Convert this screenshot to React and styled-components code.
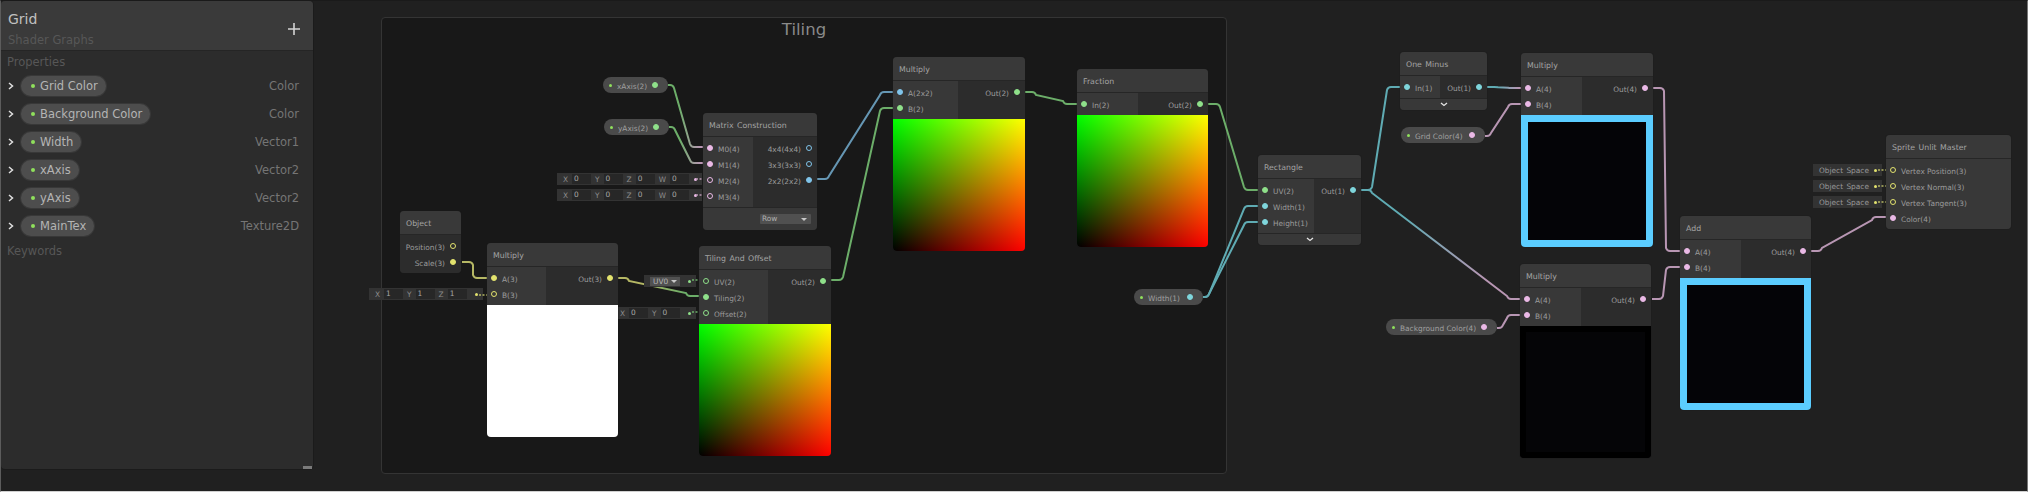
import React from "react";
import styled, { createGlobalStyle } from "styled-components";

const Global = createGlobalStyle`
  html, body { margin: 0; padding: 0; background: #202020; }
  body { font-family: "DejaVu Sans", "Liberation Sans", sans-serif; }
`;

const Colors = { vec1: "#7fd6dc", vec2: "#8fe08a", vec3: "#e3e36e", vec4: "#eab9e6", mat: "#80c4ea" };
const WireColors = { vec1: "#5fabb3", vec2: "#6cae69", vec3: "#b5b764", vec4: "#b896b3", mat: "#6596b3" };

const Page = styled.div`
  position: relative;
  width: 2028px;
  height: 492px;
  overflow: hidden;
  box-sizing: border-box;
  background: #202020;
  border-top: 1px solid #1a1a1a;
  border-left: 1px solid #5c5c5c;
  border-right: 1px solid #777;
  border-bottom: 1px solid #d0d0d0;
`;

/* blackboard */
const Board = styled.aside`
  position: absolute;
  left: 0;
  top: 0;
  width: 312px;
  height: 468px;
  background: #2c2c2c;
  border-radius: 4px;
  box-shadow: 1px 0 0 #1b1b1b, 0 1px 0 #1b1b1b;
  display: flex;
  flex-direction: column;
`;
const BoardHead = styled.header`
  height: 50px;
  flex: none;
  box-sizing: border-box;
  padding: 7px 12px 0 7px;
  background: #3a3a3a;
  border-bottom: 1px solid #252525;
  border-radius: 4px 4px 0 0;
  display: flex;
  align-items: center;
  justify-content: space-between;
`;
const BoardTitle = styled.div`
  color: #c0c0c0;
  font-size: 14px;
  line-height: 17px;
`;
const BoardSub = styled.div`
  color: #575757;
  font-size: 11.5px;
  line-height: 15px;
  margin-top: 5px;
`;
const PlusIcon = () => (
  <svg width="14" height="14" viewBox="0 0 14 14">
    <path d="M7 1V13M1 7H13" stroke="#d4d4d4" strokeWidth="1.6" />
  </svg>
);
const BoardSection = styled.div`
  color: #575757;
  font-size: 11.5px;
  line-height: 15px;
  padding-left: 6px;
  margin-top: ${(p) => p.$top}px;
`;
const PropList = styled.div`
  display: flex;
  flex-direction: column;
  gap: 8px;
  margin: 6px 0 8px;
`;
const PropRow = styled.div`
  display: flex;
  align-items: center;
  height: 20px;
  padding: 0 14px 0 7px;
`;
const Chevron = () => (
  <svg width="6" height="8" viewBox="0 0 6 8">
    <path d="M1 1L4.5 4L1 7" fill="none" stroke="#e0e0e0" strokeWidth="1.5" />
  </svg>
);
const PropPill = styled.div`
  height: 20px;
  margin-left: 7px;
  padding: 0 8px 0 10px;
  display: flex;
  align-items: center;
  gap: 5px;
  background: #4d4d4d;
  border-radius: 10px;
  box-shadow: 0 0 0 1px #383838;
  color: #b4b4b4;
  font-size: 11.5px;
`;
const GreenDot = styled.i`
  width: ${(p) => p.$size || 3}px;
  height: ${(p) => p.$size || 3}px;
  flex: none;
  border-radius: 50%;
  background: ${(p) => p.$color || "#8fe05c"};
`;
const PropType = styled.div`
  margin-left: auto;
  color: #757575;
  font-size: 11.5px;
`;
const Grip = styled.div`
  position: absolute;
  right: 1px;
  bottom: 0;
  width: 9px;
  height: 3px;
  background: #7a7a7a;
`;

/* graph */
const Group = styled.section`
  position: absolute;
  left: 380px;
  top: 16px;
  width: 846px;
  height: 457px;
  box-sizing: border-box;
  background: #181818;
  border: 1px solid #343434;
  border-radius: 4px;
  padding-top: 2px;
  text-align: center;
  color: #8a8a8a;
  font-size: 16.5px;
  line-height: 20px;
`;
const Wires = styled.svg`
  position: absolute;
  left: -1px;
  top: -1px;
`;
const NodeBox = styled.div`
  position: absolute;
  left: ${(p) => p.$x - 1}px;
  top: ${(p) => p.$y - 1}px;
  width: ${(p) => p.$w}px;
  border-radius: 4px;
  overflow: hidden;
  background: #2c2c2c;
  box-shadow: 0 0 0 1px #1c1c1c44;
  color: #9c9c9c;
  font-size: 7.4px;
`;
const NodeTitle = styled.div`
  height: 23px;
  line-height: 25px;
  padding-left: 6px;
  background: #393939;
  border-bottom: 1px solid #262626;
  color: #a4a4a4;
  font-size: 7.8px;
  word-spacing: 1px;
  white-space: nowrap;
`;
const PortArea = styled.div`
  display: flex;
`;
const PortColumn = styled.div`
  box-sizing: border-box;
  padding: 3px 0;
  flex: ${(p) => (p.$left ? "none" : "1")};
  width: ${(p) => (p.$left ? `${p.$left}px` : "auto")};
  background: ${(p) => (p.$left ? "#383838" : "#2c2c2c")};
`;
const PortRow = styled.div`
  height: 16px;
  display: flex;
  align-items: center;
  flex-direction: ${(p) => (p.$out ? "row-reverse" : "row")};
  gap: 5px;
  padding: ${(p) => (p.$out ? "0 5px 0 0" : "0 0 0 4px")};
  white-space: nowrap;
`;
const PortLabel = styled.span`
  margin-top: 2px;
`;
const Ring = styled.i`
  width: 6px;
  height: 6px;
  flex: none;
  box-sizing: border-box;
  border-radius: 50%;
  border: 1.5px solid ${(p) => p.$color};
  background: ${(p) => (p.$on ? p.$color : "transparent")};
`;
const UvPreview = styled.div`
  height: 132px;
  background: linear-gradient(to right, #000, #f00), linear-gradient(to top, #000, #0f0);
  background-blend-mode: screen;
`;
const FlatPreview = styled.div`
  height: 132px;
  box-sizing: border-box;
  background: ${(p) => p.$fill};
  border: ${(p) => p.$edge || 0}px solid ${(p) => p.$line || "transparent"};
`;
const Footer = styled.div`
  height: 11px;
  background: #383838;
  border-top: 1px solid #262626;
  display: flex;
  align-items: center;
  justify-content: ${(p) => (p.$end ? "flex-end" : "center")};
  padding-right: ${(p) => (p.$end ? 6 : 0)}px;
`;
const TallFooter = styled(Footer)`
  height: 22px;
`;
const MiniSelect = styled.div`
  width: 51px;
  height: 10px;
  line-height: 10px;
  background: #505050;
  border-radius: 1px;
  padding-left: 2px;
  box-sizing: border-box;
  display: flex;
  align-items: center;
  justify-content: space-between;
  padding-right: 4px;
  color: #b0b0b0;
  font-size: 7.4px;
`;
const Caret = styled.i`
  width: 0;
  height: 0;
  border-left: 3px solid transparent;
  border-right: 3px solid transparent;
  border-top: 3px solid #c8c8c8;
`;
const Fold = () => (
  <svg width="8" height="5" viewBox="0 0 8 5">
    <path d="M1 1L4 3.5L7 1" fill="none" stroke="#e4e4e4" strokeWidth="1.3" />
  </svg>
);

const Pill = styled.div`
  position: absolute;
  left: ${(p) => p.$x - 1}px;
  top: ${(p) => p.$y - 1}px;
  width: ${(p) => p.$w}px;
  height: 16px;
  box-sizing: border-box;
  padding: 0 10px 0 6px;
  border-radius: 8px;
  background: #4a4a4a;
  display: flex;
  align-items: center;
  color: #a0a0a0;
  font-size: 7.4px;
  gap: 5px;
  white-space: nowrap;
`;
const PillEnd = styled(Ring)`
  margin-left: auto;
`;

const Stub = styled.div`
  position: absolute;
  left: ${(p) => p.$x - 1}px;
  top: ${(p) => p.$y - 1}px;
  width: ${(p) => p.$w}px;
  height: 12px;
  box-sizing: border-box;
  padding: 0 5px 0 6px;
  background: #333;
  display: flex;
  align-items: center;
  gap: 4px;
  color: #8c8c8c;
  font-size: 7.4px;
  white-space: nowrap;
`;
const StubField = styled.span`
  width: 19px;
  height: 10px;
  line-height: 10px;
  padding-left: 2px;
  box-sizing: border-box;
  background: #272727;
  color: #a8a8a8;
`;
const StubSelect = styled.span`
  display: flex;
  align-items: center;
  gap: 3px;
  height: 9px;
  padding: 0 3px;
  background: #515151;
  color: #b8b8b8;
`;
const StubText = styled.span`
  color: #999;
  word-spacing: 1px;
`;
const StubDot = styled(GreenDot)`
  margin-left: auto;
`;

const props = [
  ["Grid Color", "Color"],
  ["Background Color", "Color"],
  ["Width", "Vector1"],
  ["xAxis", "Vector2"],
  ["yAxis", "Vector2"],
  ["MainTex", "Texture2D"],
];

const nodes = [
  { title: "Object", x: 400, y: 211, w: 61, outs: [["Position(3)", "vec3"], ["Scale(3)", "vec3", 1]] },
  { title: "Multiply", x: 487, y: 243, w: 131, left: 59, ins: [["A(3)", "vec3", 1], ["B(3)", "vec3"]], outs: [["Out(3)", "vec3", 1]], preview: "white" },
  { title: "Tiling And Offset", x: 699, y: 246, w: 132, left: 69, ins: [["UV(2)", "vec2"], ["Tiling(2)", "vec2", 1], ["Offset(2)", "vec2"]], outs: [["Out(2)", "vec2", 1]], preview: "uv" },
  { title: "Matrix Construction", x: 703, y: 113, w: 114, left: 50, ins: [["M0(4)", "vec4", 1], ["M1(4)", "vec4", 1], ["M2(4)", "vec4"], ["M3(4)", "vec4"]], outs: [["4x4(4x4)", "mat"], ["3x3(3x3)", "mat"], ["2x2(2x2)", "mat", 1]], select: "Row" },
  { title: "Multiply", x: 893, y: 57, w: 132, left: 65, ins: [["A(2x2)", "mat", 1], ["B(2)", "vec2", 1]], outs: [["Out(2)", "vec2", 1]], preview: "uv" },
  { title: "Fraction", x: 1077, y: 69, w: 131, left: 61, ins: [["In(2)", "vec2", 1]], outs: [["Out(2)", "vec2", 1]], preview: "uv" },
  { title: "Rectangle", x: 1258, y: 155, w: 103, left: 56, ins: [["UV(2)", "vec2", 1], ["Width(1)", "vec1", 1], ["Height(1)", "vec1", 1]], outs: [["Out(1)", "vec1", 1]], fold: true },
  { title: "One Minus", x: 1400, y: 52, w: 87, left: 40, ins: [["In(1)", "vec1", 1]], outs: [["Out(1)", "vec1", 1]], fold: true },
  { title: "Multiply", x: 1521, y: 53, w: 132, left: 61, ins: [["A(4)", "vec4", 1], ["B(4)", "vec4", 1]], outs: [["Out(4)", "vec4", 1]], preview: "blue" },
  { title: "Multiply", x: 1520, y: 264, w: 131, left: 61, ins: [["A(4)", "vec4", 1], ["B(4)", "vec4", 1]], outs: [["Out(4)", "vec4", 1]], preview: "dark" },
  { title: "Add", x: 1680, y: 216, w: 131, left: 61, ins: [["A(4)", "vec4", 1], ["B(4)", "vec4", 1]], outs: [["Out(4)", "vec4", 1]], preview: "blue" },
  { title: "Sprite Unlit Master", x: 1886, y: 135, w: 125, ins: [["Vertex Position(3)", "vec3"], ["Vertex Normal(3)", "vec3"], ["Vertex Tangent(3)", "vec3"], ["Color(4)", "vec4", 1]], master: true },
];

const pills = [
  ["xAxis(2)", 603, 77, 65, "vec2"],
  ["yAxis(2)", 604, 119, 65, "vec2"],
  ["Width(1)", 1134, 289, 69, "vec1"],
  ["Grid Color(4)", 1401, 127, 84, "vec4"],
  ["Background Color(4)", 1386, 319, 111, "vec4"],
];

const stubs = [
  { x: 369, y: 288, w: 114, fields: ["X", "1", "Y", "1", "Z", "1"], kind: "vec3" },
  { x: 614, y: 307, w: 82, fields: ["X", "0", "Y", "0"], kind: "vec2" },
  { x: 557, y: 173, w: 145, fields: ["X", "0", "Y", "0", "Z", "0", "W", "0"], kind: "vec4" },
  { x: 557, y: 189, w: 145, fields: ["X", "0", "Y", "0", "Z", "0", "W", "0"], kind: "vec4" },
  { x: 644, y: 275, w: 52, select: "UV0", kind: "vec2" },
  { x: 1813, y: 164, w: 69, text: "Object Space", kind: "vec3" },
  { x: 1813, y: 180, w: 69, text: "Object Space", kind: "vec3" },
  { x: 1813, y: 196, w: 69, text: "Object Space", kind: "vec3" },
];

// x1,y1 output end, x2,y2 input end, colour kinds at both ends, last value is the output stub length
const wires = [
  [462, 262, 494, 278, "vec3", "vec3", 9],
  [618, 278, 707, 296, "vec3", "vec2", 9],
  [831, 280, 901, 108, "vec2", "vec2", 10],
  [668, 85, 711, 147, "vec2", "vec4", 4],
  [669, 127, 711, 163, "vec2", "vec4", 4],
  [817, 179, 901, 92, "mat", "mat", 10],
  [1025, 92, 1084, 104, "vec2", "vec2", 9],
  [1208, 104, 1265, 190, "vec2", "vec2", 10],
  [1361, 190, 1408, 87, "vec1", "vec1", 9],
  [1361, 190, 1528, 299, "vec1", "vec4", 9],
  [1203, 297, 1265, 206, "vec1", "vec1", 4],
  [1203, 297, 1265, 222, "vec1", "vec1", 4],
  [1487, 87, 1529, 88, "vec1", "vec4", 9],
  [1485, 136, 1529, 104, "vec4", "vec4", 4],
  [1653, 88, 1687, 251, "vec4", "vec4", 9],
  [1497, 328, 1528, 315, "vec4", "vec4", 4],
  [1652, 299, 1687, 267, "vec4", "vec4", 9],
  [1811, 251, 1893, 217, "vec4", "vec4", 9],
];

// short dotted links from the dot of an input stub to its port
const links = [
  [479, 295, 491, "vec3"],
  [692, 280, 704, "vec2"],
  [692, 312, 704, "vec2"],
  [696, 179, 708, "vec4"],
  [696, 195, 708, "vec4"],
  [1878, 170, 1890, "vec3"],
  [1878, 186, 1890, "vec3"],
  [1878, 202, 1890, "vec3"],
];

function wirePath(x1, y1, x2, y2, stub) {
  const d = Math.sign(y2 - y1) || 1;
  const r = Math.min(3, Math.abs(y2 - y1) / 4);
  const a = x1 + stub;
  const b = x2 - 19;
  return `M${x1} ${y1}H${a - 2}Q${a + 1} ${y1} ${a + 2} ${y1 + d * r}L${b - 2} ${y2 - d * r}Q${b - 1} ${y2} ${b + 2} ${y2}H${x2}`;
}

function GraphWires() {
  return (
    <Wires width="2028" height="492" viewBox="0 0 2028 492" fill="none">
      <defs>
        {wires.map(([x1, , x2, , a, b], i) => (
          <linearGradient key={i} id={`w${i}`} gradientUnits="userSpaceOnUse" x1={x1} y1="0" x2={x2} y2="0">
            <stop offset="0.25" stopColor={WireColors[a]} />
            <stop offset="0.75" stopColor={WireColors[b]} />
          </linearGradient>
        ))}
      </defs>
      {wires.map(([x1, y1, x2, y2, , , stub], i) => (
        <path key={i} d={wirePath(x1, y1, x2, y2, stub)} stroke={`url(#w${i})`} strokeWidth="2" />
      ))}
    </Wires>
  );
}

function StubLinks() {
  return (
    <Wires width="2028" height="492" viewBox="0 0 2028 492" fill="none">
      {links.map(([x1, y, x2, k], i) => (
        <path key={i} d={`M${x1} ${y}H${x2}`} stroke={WireColors[k]} strokeDasharray="2 1.5" strokeWidth="1.5" />
      ))}
    </Wires>
  );
}

function Preview({ kind }) {
  if (kind === "uv") return <UvPreview />;
  if (kind === "white") return <FlatPreview $fill="#fff" />;
  if (kind === "blue") return <FlatPreview $fill="#040407" $edge={7} $line="#5bcdff" />;
  if (kind === "dark") return <FlatPreview $fill="#050507" $edge={6} $line="#000" />;
  return null;
}

function PortLine({ port, out }) {
  const [label, kind, on] = port;
  return (
    <PortRow $out={out}>
      <Ring $color={Colors[kind]} $on={on} />
      <PortLabel>{label}</PortLabel>
    </PortRow>
  );
}

function Node({ n }) {
  return (
    <NodeBox $x={n.x} $y={n.y} $w={n.w}>
      <NodeTitle>{n.title}</NodeTitle>
      <PortArea>
        {n.ins && (
          <PortColumn $left={n.master ? n.w : n.left}>
            {n.ins.map((p, i) => (
              <PortLine key={i} port={p} />
            ))}
          </PortColumn>
        )}
        {n.outs && (
          <PortColumn>
            {n.outs.map((p, i) => (
              <PortLine key={i} port={p} out />
            ))}
          </PortColumn>
        )}
      </PortArea>
      {n.preview && <Preview kind={n.preview} />}
      {n.fold && (
        <Footer>
          <Fold />
        </Footer>
      )}
      {n.select && (
        <TallFooter $end>
          <MiniSelect>
            {n.select}
            <Caret />
          </MiniSelect>
        </TallFooter>
      )}
    </NodeBox>
  );
}

function InputStub({ s }) {
  return (
    <Stub $x={s.x} $y={s.y} $w={s.w}>
      {s.fields &&
        s.fields.map((f, i) => (i % 2 ? <StubField key={i}>{f}</StubField> : <span key={i}>{f}</span>))}
      {s.select && (
        <StubSelect>
          {s.select}
          <Caret />
        </StubSelect>
      )}
      {s.text && <StubText>{s.text}</StubText>}
      <StubDot $color={Colors[s.kind]} />
    </Stub>
  );
}

export default function App() {
  return (
    <>
      <Global />
      <Page>
        <Group>Tiling</Group>
        <GraphWires />
        {stubs.map((s, i) => (
          <InputStub key={i} s={s} />
        ))}
        <StubLinks />
        {nodes.map((n, i) => (
          <Node key={i} n={n} />
        ))}
        {pills.map(([label, x, y, w, kind]) => (
          <Pill key={label} $x={x} $y={y} $w={w}>
            <GreenDot />
            <PortLabel>{label}</PortLabel>
            <PillEnd $color={Colors[kind]} $on />
          </Pill>
        ))}
        <Board>
          <BoardHead>
            <div>
              <BoardTitle>Grid</BoardTitle>
              <BoardSub>Shader Graphs</BoardSub>
            </div>
            <PlusIcon />
          </BoardHead>
          <BoardSection $top={4}>Properties</BoardSection>
          <PropList>
            {props.map(([name, type]) => (
              <PropRow key={name}>
                <Chevron />
                <PropPill>
                  <GreenDot $size={4} />
                  {name}
                </PropPill>
                <PropType>{type}</PropType>
              </PropRow>
            ))}
          </PropList>
          <BoardSection $top={0}>Keywords</BoardSection>
          <Grip />
        </Board>
      </Page>
    </>
  );
}
